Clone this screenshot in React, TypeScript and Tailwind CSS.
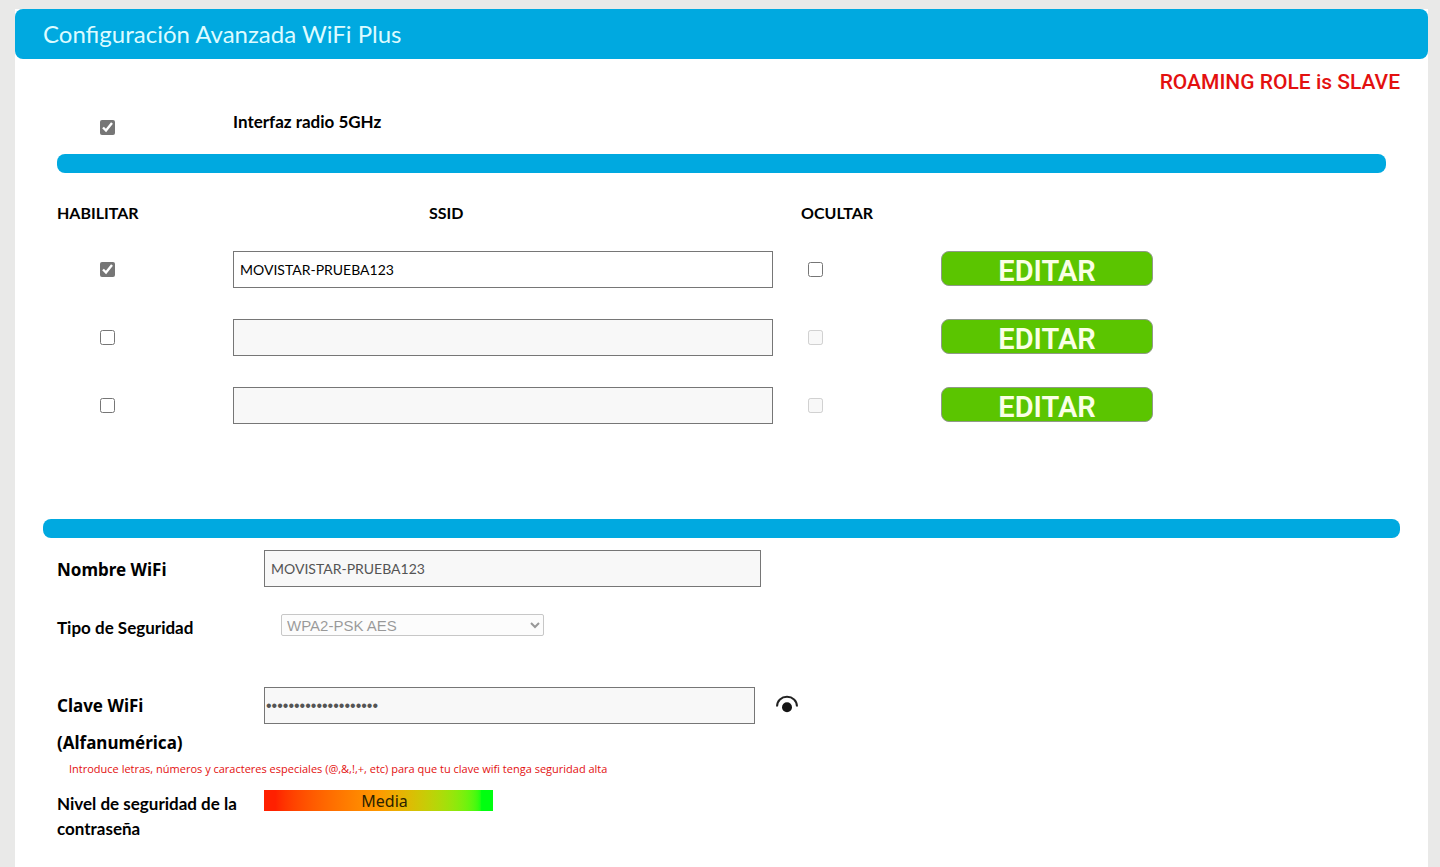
import { useState } from "react";

interface Network {
    id: number;
    ssid: string;
    enabled: boolean;
    hidden: boolean;
}

const initialNetworks: Network[] = [
    { id: 1, ssid: "MOVISTAR-PRUEBA123", enabled: true, hidden: false },
    { id: 2, ssid: "", enabled: false, hidden: false },
    { id: 3, ssid: "", enabled: false, hidden: false },
]

const Divider = () => <div className="h-[19px] rounded-lg bg-[#00a9e0]" />

const EyeIcon = () => (
    <svg width="22" height="18" viewBox="0 0 22 18" fill="none" aria-hidden="true">
        <path d="M1 11.5C1 5.5 5.5 1.8 11 1.8S21 5.5 21 11.5" stroke="#222" strokeWidth="2" />
        <circle cx="11" cy="12.2" r="5" fill="#151515" />
    </svg>
)

export default function App() {
    const [radioEnabled, setRadioEnabled] = useState(true)
    const [networks, setNetworks] = useState(initialNetworks)
    const [showKey, setShowKey] = useState(false)

    function updateNetwork(id: number, change: Partial<Network>) {
        setNetworks(networks.map((n) => (n.id === id ? { ...n, ...change } : n)))
    }

    return (
        <div className="min-h-screen bg-[#e9e9e8] pt-[9px] pr-3 pl-[15px] font-['Noto_Sans',sans-serif] text-black">
            <main className="min-h-[858px] bg-white">
                <h1 className="flex h-[50px] items-center rounded-lg bg-[#00a9e0] px-7 font-['Lato',sans-serif] text-2xl text-[#dcfbff]">
                    Configuración Avanzada WiFi Plus
                </h1>
                <p className="px-7 pt-2 text-right font-['Roboto',sans-serif] text-[21px] leading-[30px] font-medium text-[#e3100f]">
                    ROAMING ROLE is SLAVE
                </p>

                <section className="px-[42px] pt-3.5">
                    <div className="flex h-[43px] pl-[43px]">
                        <input
                            id="radio"
                            type="checkbox"
                            className="mt-[9px] size-[15px] accent-[#767676]"
                            checked={radioEnabled}
                            onChange={(e) => setRadioEnabled(e.target.checked)}
                        />
                        <label htmlFor="radio" className="pl-[118px] font-['Lato',sans-serif] text-[17px] leading-[22px] font-bold">
                            Interfaz radio 5GHz
                        </label>
                    </div>
                    <Divider />
                    <table className="mt-[22px] w-full table-fixed font-['Lato',sans-serif]">
                        <thead>
                            <tr className="h-[56px] text-left align-top text-base font-bold">
                                <th className="w-[176px] pt-1.5">HABILITAR</th>
                                <th className="pt-1.5 pl-49">SSID</th>
                                <th className="w-[140px] pt-1.5">OCULTAR</th>
                                <th className="w-[445px]"></th>
                            </tr>
                        </thead>
                        <tbody>
                            {networks.map((network) => (
                                <tr key={network.id} className="h-[68px] align-top">
                                    <td className="pt-[11px] pl-[43px]">
                                        <input
                                            type="checkbox"
                                            aria-label="Habilitar"
                                            className="block size-[15px] accent-[#767676]"
                                            checked={network.enabled}
                                            onChange={(e) => updateNetwork(network.id, { enabled: e.target.checked })}
                                        />
                                    </td>
                                    <td className="pr-7">
                                        <input
                                            type="text"
                                            aria-label="SSID"
                                            className="block h-[37px] w-full border border-[#767676] px-1.5 text-sm disabled:bg-[#f8f8f8]"
                                            value={network.ssid}
                                            disabled={!network.enabled}
                                            onChange={(e) => updateNetwork(network.id, { ssid: e.target.value })}
                                        />
                                    </td>
                                    <td className="pt-[11px] pl-[7px]">
                                        <input
                                            type="checkbox"
                                            aria-label="Ocultar"
                                            className="block size-[15px] accent-[#767676]"
                                            checked={network.hidden}
                                            disabled={!network.enabled}
                                            onChange={(e) => updateNetwork(network.id, { hidden: e.target.checked })}
                                        />
                                    </td>
                                    <td>
                                        <button className="flex h-[35px] w-[212px] items-center justify-center rounded-lg border border-[#8f9a88] bg-[#5bc500] pt-1.5 font-['Roboto',sans-serif] text-[29px] leading-none font-semibold text-[#faffe6]">
                                            EDITAR
                                        </button>
                                    </td>
                                </tr>
                            ))}
                        </tbody>
                    </table>
                </section>

                <section className="px-7 pt-16">
                    <Divider />
                    <div className="grid grid-cols-[207px_1fr] pt-3 pl-3.5 text-[17px] leading-[25px] font-bold">
                        <label htmlFor="name" className="h-[64px] pt-[7px]">Nombre WiFi</label>
                        <div>
                            <input
                                id="name"
                                type="text"
                                disabled
                                className="block h-[37px] w-[497px] max-w-full border border-[#767676] bg-[#f8f8f8] px-1.5 font-['Lato',sans-serif] text-sm font-normal text-[#545454]"
                                defaultValue="MOVISTAR-PRUEBA123"
                            />
                        </div>

                        <label htmlFor="security" className="h-[73px] pt-px font-['Lato',sans-serif]">Tipo de Seguridad</label>
                        <div className="pl-[17px]">
                            <select
                                id="security"
                                disabled
                                className="block h-[22px] w-[263px] rounded-xs border border-[#767676] bg-[#f8f8f8] pl-px font-['Liberation_Sans',sans-serif] text-[15px] leading-5 font-normal opacity-40"
                            >
                                <option>WPA2-PSK AES</option>
                            </select>
                        </div>

                        <label htmlFor="key" className="leading-[37px]">
                            Clave WiFi
                            <br />
                            (Alfanumérica)
                        </label>
                        <div className="flex items-start">
                            <input
                                id="key"
                                type={showKey ? "text" : "password"}
                                disabled
                                className="h-[37px] w-[491px] border border-[#767676] bg-[#f8f8f8] px-px font-['Liberation_Sans',sans-serif] text-base font-normal text-[#545454]"
                                defaultValue="MovistarPrueba123456"
                            />
                            <button className="mt-2 ml-[21px]" aria-label="Mostrar clave" onClick={() => setShowKey(!showKey)}>
                                <EyeIcon />
                            </button>
                        </div>

                        <p className="col-span-2 pl-3 font-['Open_Sans',sans-serif] text-[11px] leading-4 font-normal text-[#e3100f]">
                            Introduce letras, números y caracteres especiales (@,&amp;,!,+, etc) para que tu clave wifi tenga seguridad alta
                        </p>

                        <div className="pt-3.5 pr-4 font-['Lato',sans-serif]">Nivel de seguridad de la contraseña</div>
                        <div className="pt-[13px]">
                            <div className="flex h-[21px] w-[229px] items-center justify-center bg-linear-to-r from-[#ff2000] from-5% via-[#ff9800] to-[#00ff10] to-95% pl-3 text-base font-normal text-[#2b2200]">
                                Media
                            </div>
                        </div>
                    </div>
                </section>
            </main>
        </div>
    )
}
